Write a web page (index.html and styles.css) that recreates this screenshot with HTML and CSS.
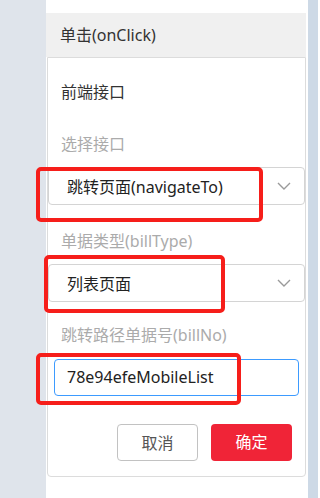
FILE: index.html
```html
<!DOCTYPE html>
<html lang="zh">
<head>
<meta charset="utf-8">
<link rel="stylesheet" href="styles.css">
</head>
<body>
<div class="page">
  <div class="side-left"></div>
  <div class="panel">
    <div class="event-head">单击(onClick)</div>
    <div class="card">
      <div class="section-title">前端接口</div>
      <div class="label first">选择接口</div>
      <div class="select">
        <span class="select-text">跳转页面(navigateTo)</span>
        <svg class="chev" width="14" height="8" viewBox="0 0 14 8"><path d="M1 1 L7 7 L13 1" fill="none" stroke="#9a9a9a" stroke-width="1.4"/></svg>
      </div>
      <div class="label">单据类型(billType)</div>
      <div class="select">
        <span class="select-text">列表页面</span>
        <svg class="chev" width="14" height="8" viewBox="0 0 14 8"><path d="M1 1 L7 7 L13 1" fill="none" stroke="#9a9a9a" stroke-width="1.4"/></svg>
      </div>
      <div class="label last">跳转路径单据号(billNo)</div>
      <div class="input">78e94efeMobileList</div>
      <div class="actions">
        <div class="btn btn-cancel">取消</div>
        <div class="btn btn-ok">确定</div>
      </div>
    </div>
  </div>
  <div class="side-right"></div>
  <div class="mark mark-1"></div>
  <div class="mark mark-2"></div>
  <div class="mark mark-3"></div>
</div>
</body>
</html>
```

FILE: styles.css
```css
html, body {
  margin: 0;
  padding: 0;
}
body {
  font-family: "Noto Sans", "Noto Sans CJK SC", sans-serif;
  font-size: 16px;
  color: #333;
}
.page {
  position: relative;
  display: grid;
  grid-template-columns: 46px 262px 10px;
  width: 318px;
  height: 498px;
  overflow: hidden;
}
.side-left { background: #dfe4eb; }
.side-right { background: #cdd9e6; }
.panel {
  background: #fff;
  padding-top: 13px;
}
.event-head {
  height: 44px;
  line-height: 44px;
  margin-right: 2px;
  padding-left: 14px;
  background: #f0f0f0;
  color: #333;
}
.card {
  margin-left: 1px;
  margin-right: 2px;
  border: 1px solid #dcdcdc;
  border-radius: 0 0 4px 4px;
  padding: 22px 0 15px;
}
.section-title {
  padding-left: 13px;
  line-height: 24px;
  color: #333;
}
.label {
  padding-left: 13px;
  line-height: 24px;
  color: #ababab;
  margin-top: 24px;
  margin-bottom: 11px;
}
.label.first { margin-top: 28px; }
.label.last { margin-top: 21px; margin-bottom: 12px; }
.select {
  display: flex;
  align-items: center;
  justify-content: space-between;
  height: 36px;
  border: 1px solid #d4d4d4;
  border-radius: 4px;
  padding: 0 13px 0 18px;
}
.select-text { color: #222; }
.chev { display: block; }
.input {
  margin: 0 6px;
  height: 35px;
  line-height: 35px;
  border: 1px solid #3d9bff;
  border-radius: 4px;
  padding-left: 12px;
  color: #222;
}
.actions {
  display: flex;
  justify-content: flex-end;
  gap: 13px;
  margin-top: 28px;
  padding-right: 13px;
}
.btn {
  width: 81px;
  height: 37px;
  line-height: 37px;
  text-align: center;
  border-radius: 4px;
  box-sizing: border-box;
}
.btn-cancel {
  border: 1px solid #c2c2c2;
  color: #555;
  background: #fff;
}
.btn-ok {
  background: #f02437;
  color: #fff;
}
.mark {
  position: absolute;
  border: 4px solid #f61e1a;
  border-radius: 5px;
  box-sizing: border-box;
}
.mark-1 { left: 36px; top: 167px; width: 227px; height: 55px; }
.mark-2 { left: 44px; top: 255px; width: 181px; height: 58px; }
.mark-3 { left: 36px; top: 353px; width: 205px; height: 52px; }
```
